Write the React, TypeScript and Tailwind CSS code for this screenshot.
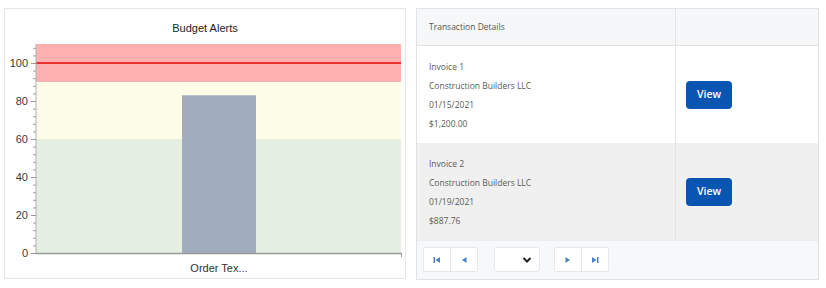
import React from "react";

const Y0 = 253;
const PX = 1.9;
const yOf = (v: number) => Y0 - v * PX;

function Chart() {
  const minor: number[] = [];
  for (let v = 0; v <= 108; v += 4) minor.push(v);
  const major = [0, 20, 40, 60, 80, 100];
  return (
    <svg width={400} height={243} viewBox="5 35 400 243" className="block">
      <rect x={36} y={yOf(110)} width={365} height={yOf(90) - yOf(110)} fill="#ffb1b1" />
      <rect x={36} y={yOf(90)} width={365} height={yOf(60) - yOf(90)} fill="#fefee8" />
      <rect x={36} y={yOf(60)} width={365} height={Y0 - yOf(60)} fill="#e4efe2" />
      <rect x={182} y={yOf(83)} width={74} height={Y0 - yOf(83)} fill="#a0adbd" />
      <line x1={36} x2={401} y1={yOf(100)} y2={yOf(100)} stroke="#e8302c" strokeWidth={2.2} />
      <line x1={36} x2={36} y1={yOf(110)} y2={Y0} stroke="#b0b0b0" strokeWidth={1} />
      {minor.map((v) => (
        <line key={"m" + v} x1={33} x2={36} y1={yOf(v) + 0.5} y2={yOf(v) + 0.5} stroke="#9f9f9f" strokeWidth={1} />
      ))}
      {major.map((v) => (
        <line key={"M" + v} x1={31} x2={36} y1={yOf(v) + 0.5} y2={yOf(v) + 0.5} stroke="#999999" strokeWidth={1} />
      ))}
      <line x1={36} x2={402} y1={Y0 + 0.5} y2={Y0 + 0.5} stroke="#9a9a9a" strokeWidth={1.5} />
      <line x1={401.5} x2={401.5} y1={Y0} y2={Y0 + 4} stroke="#9a9a9a" strokeWidth={1} />
      {major.map((v) => (
        <text
          key={"t" + v}
          x={28}
          y={yOf(v) + 4}
          textAnchor="end"
          fontFamily="'Liberation Sans', Arial, sans-serif"
          fontSize={11}
          fill="#3a3a3a"
        >
          {v}
        </text>
      ))}
      <text
        x={219}
        y={272}
        textAnchor="middle"
        fontFamily="'Liberation Sans', Arial, sans-serif"
        fontSize={11}
        fill="#333333"
      >
        Order Tex...
      </text>
    </svg>
  );
}

function Row({ lines, bg }: { lines: string[]; bg: string }) {
  return (
    <div className={`flex h-[97px] ${bg}`}>
      <div className="w-[259px] border-r border-[#e4e4e4] pl-[12px] flex flex-col justify-center">
        {lines.map((l, i) => (
          <div key={i} className="leading-[19px] text-[8.5px] text-[#5a5a5a]">
            {l}
          </div>
        ))}
      </div>
      <div className="flex-1 flex items-center pl-[10px]">
        <button className="w-[46px] h-[28px] rounded-[4px] bg-[#0a55b1] text-white text-[10.5px] font-semibold">
          View
        </button>
      </div>
    </div>
  );
}

function Tri({ dir, bar }: { dir: "l" | "r"; bar?: boolean }) {
  return (
    <svg width={8} height={8} viewBox="0 0 8 8">
      {dir === "l" ? (
        <>
          {bar && <rect x={0.5} y={1} width={1.5} height={6} fill="#4f82c4" />}
          <polygon points={bar ? "7,1 2.5,4 7,7" : "6.5,1 2,4 6.5,7"} fill="#4f82c4" />
        </>
      ) : (
        <>
          <polygon points={bar ? "1,1 5.5,4 1,7" : "1.5,1 6,4 1.5,7"} fill="#4f82c4" />
          {bar && <rect x={6} y={1} width={1.5} height={6} fill="#4f82c4" />}
        </>
      )}
    </svg>
  );
}

export default function App() {
  return (
    <div
      className="w-[826px] h-[288px] bg-white flex items-start gap-[10px] pt-[8px] pl-[4px]"
      style={{ fontFamily: "'Liberation Sans', Arial, sans-serif" }}
    >
      <div className="w-[402px] h-[271px] border border-[#e6e6e6] bg-white flex flex-col">
        <div className="pt-[12px] h-[26px] leading-[14px] text-center text-[11px] text-[#222]">Budget Alerts</div>
        <Chart />
      </div>
      <div
        className="w-[403px] h-[272px] border border-[#e2e2e2] flex flex-col"
        style={{ fontFamily: "'Open Sans', 'Noto Sans', sans-serif" }}
      >
        <div className="flex h-[37px] bg-[#f6f7f8] border-b border-[#e3e3e3]">
          <div className="w-[259px] border-r border-[#e4e4e4] pl-[12px] flex items-center text-[8.5px] text-[#555]">
            Transaction Details
          </div>
          <div className="flex-1" />
        </div>
        <Row bg="bg-white" lines={["Invoice 1", "Construction Builders LLC", "01/15/2021", "$1,200.00"]} />
        <Row bg="bg-[#f0f0f0]" lines={["Invoice 2", "Construction Builders LLC", "01/19/2021", "$887.76"]} />
        <div className="flex-1 bg-[#f7f8f9] border-t border-[#ececec] flex items-start pt-[6px] pl-[6px]">
          <div className="flex h-[25px] bg-white border border-[#e6e8eb] rounded-[2px]">
            <div className="w-[27px] flex items-center justify-center border-r border-[#e6e8eb]">
              <Tri dir="l" bar />
            </div>
            <div className="w-[26px] flex items-center justify-center">
              <Tri dir="l" />
            </div>
          </div>
          <div className="ml-[16px] w-[46px] h-[25px] bg-white border border-[#e6e8eb] rounded-[3px] flex items-center pl-[11px] pr-[7px] justify-between">
            <span className="text-[6px] text-[#ddd]">-</span>
            <svg width={10} height={8} viewBox="0 0 10 8">
              <polyline points="1.5,2 5,5.5 8.5,2" fill="none" stroke="#222" strokeWidth={2} />
            </svg>
          </div>
          <div className="ml-[14px] flex h-[25px] bg-white border border-[#e6e8eb] rounded-[2px]">
            <div className="w-[27px] flex items-center justify-center border-r border-[#e6e8eb]">
              <Tri dir="r" />
            </div>
            <div className="w-[26px] flex items-center justify-center">
              <Tri dir="r" bar />
            </div>
          </div>
        </div>
      </div>
    </div>
  );
}
